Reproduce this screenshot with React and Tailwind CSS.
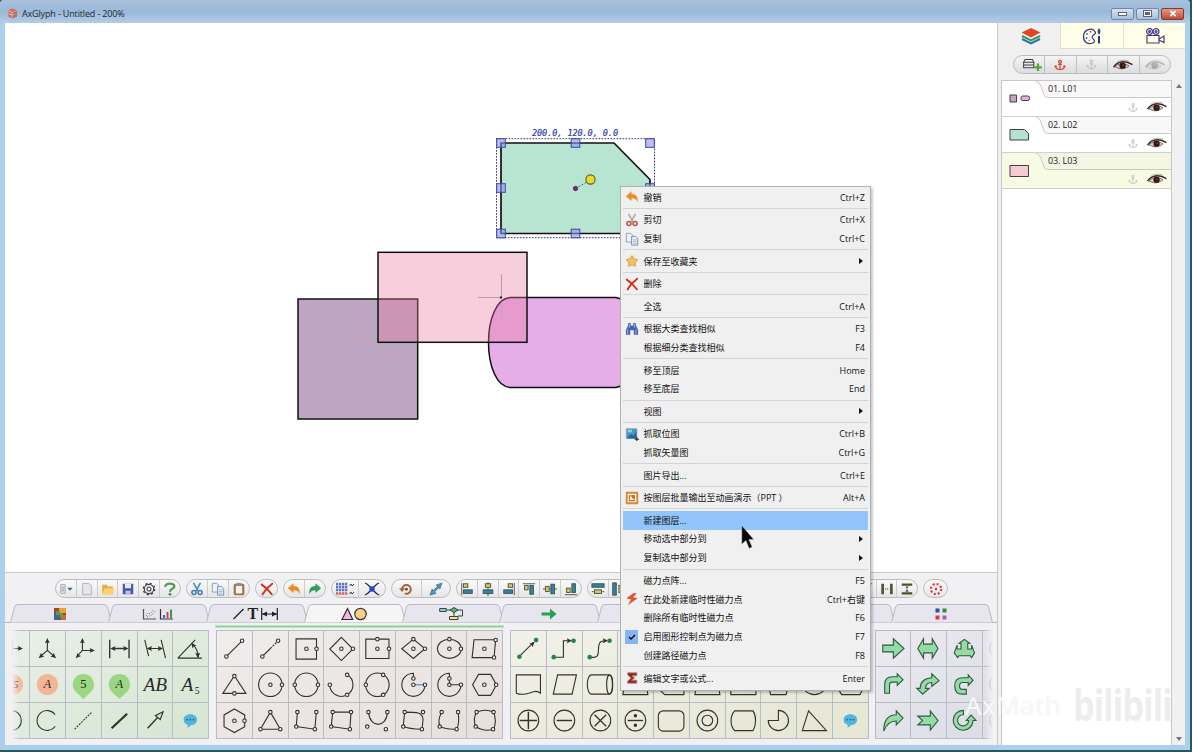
import React from 'react';
import { FaAnchor, FaStar } from 'react-icons/fa';

const ink = '#33322d';

/* ---------- palette primitives ---------- */

const Cell = ({ children }) => (
  <div className="h-9 w-[35.75px] shrink-0 border-r border-b border-[#b9bcc6]">
    <svg viewBox="0 0 36 36" className="block h-full w-full" fill="none" stroke={ink} strokeWidth="1.15">
      {children}
    </svg>
  </div>
);

const Dots = ({ at, fill = '#f6f3f0', r = 1.8 }) =>
  at.map(([x, y]) => <circle key={`${x}-${y}`} cx={x} cy={y} r={r} fill={fill} />);

const Tip = ({ x, y, angle = 0 }) => (
  <path d="M0 0 L-5.5 -2.5 L-4.5 0 L-5.5 2.5 Z" fill={ink} stroke="none" transform={`translate(${x} ${y}) rotate(${angle})`} />
);

const Italic = ({ x = 18, y = 23, size = 15, children }) => (
  <text x={x} y={y} fontSize={size} textAnchor="middle" fill="#2b2b2b" stroke="none" fontStyle="italic" fontFamily="Liberation Serif, serif">
    {children}
  </text>
);

const Chat = () => (
  <g stroke="none">
    <path d="M18 11.500c4 0 7 2.400 7 5.700 0 3.200-2.700 5.600-6.600 5.700-.5 1.200-2 2.200-3.900 2.400.8-.8 1-1.800.8-2.700C12.700 21.700 11 19.700 11 17.200c0-3.300 3-5.700 7-5.700z" fill="#55b4dc" />
    <circle cx="14.800" cy="17" r=".9" fill="#1b6b97" />
    <circle cx="18" cy="17" r=".9" fill="#1b6b97" />
    <circle cx="21.200" cy="17" r=".9" fill="#1b6b97" />
  </g>
);

const annotationCells = [
  <g><path d="M7 18h17M18 8v18" /><Tip x={29} y={18} /><path d="M20 18h6" /></g>,
  <g><path d="M18 20V10M18 20l-7 6M18 20l7 6" /><Tip x={18} y={7} angle={-90} /><Tip x={9} y={28} angle={138} /><Tip x={27} y={28} angle={42} /></g>,
  <g><path d="M17 20V9M17 20h11M17 20l-5 5.500" /><Tip x={17} y={7} angle={-90} /><Tip x={30} y={20} /><Tip x={10} y={28} angle={135} /></g>,
  <g><path d="M8 9v19M28 9v19M11 18h14" strokeWidth="1.400" /><Tip x={27.500} y={18} /><Tip x={8.500} y={18} angle={180} /></g>,
  <g><path d="M7 9l4 17M24 9l4.500 19M11 18h13" /><Tip x={26} y={18} /><Tip x={9} y={18} angle={180} /></g>,
  <g><path d="M5 28h25M5 28L23 9M20 13c3 3 6 8 6 14" /><Tip x={19} y={12} angle={-125} /><Tip x={26} y={28} angle={85} /></g>,
  <g><circle cx="18" cy="18" r="11" fill="#f2bd9d" stroke="none" /><Italic size={11} x={21.500} y={22}>5</Italic></g>,
  <g><circle cx="18" cy="18" r="11" fill="#f2b595" stroke="none" /><Italic size={13} y={22}>A</Italic></g>,
  <g><path d="M18 7a11 11 0 0 1 8 18.500L18 33l-8-7.500A11 11 0 0 1 18 7z" fill="#9bd683" stroke="none" /><text x="18" y="22" fontSize="13" textAnchor="middle" fill="#222" stroke="none" fontFamily="Liberation Serif, serif">5</text></g>,
  <g><path d="M18 7a11 11 0 0 1 8 18.500L18 33l-8-7.500A11 11 0 0 1 18 7z" fill="#9bd683" stroke="none" /><Italic size={13} y={22}>A</Italic></g>,
  <Italic size={20} y={25}>AB</Italic>,
  <g><Italic size={20} x={15} y={25}>A</Italic><text x="25" y="28" fontSize="10" textAnchor="middle" fill="#222" stroke="none" fontFamily="Liberation Serif, serif">5</text></g>,
  <circle cx="17" cy="18" r="10.300" />,
  <path d="M26 12a10.300 10.300 0 1 0 0 12" />,
  <path d="M9 27L27 9" strokeDasharray="2 1.200" />,
  <path d="M10 26L26 11" strokeWidth="2.400" />,
  <g><path d="M10 26L22 13" strokeWidth="1.400" /><path d="M26 9l-8 4 5 4z" fill="#dce8da" /></g>,
  <Chat />,
];

const shapeCells = [
  <g><path d="M10 26L26 10" /><Dots at={[[9.700, 26.300], [26, 10]]} /></g>,
  <g><path d="M10 26l8-8" /><path d="M18 18l8-8" strokeDasharray="2 1.200" /><Dots at={[[9.700, 26.300], [26, 10]]} /></g>,
  <g><path d="M7.300 8h21.200v21H7.300z" /><Dots at={[[18, 18.300], [28.500, 18.300]]} /></g>,
  <g><path d="M18 6.500l12 12-12 12-12-12z" /><Dots at={[[18, 18.300], [30, 18.300]]} /></g>,
  <g><path d="M6 8.300h24v20H6z" /><Dots at={[[18, 8.300], [18, 18.300], [30, 18.300]]} /></g>,
  <g><path d="M18 8.300l12 10-12 10-12-10z" /><Dots at={[[18, 8.300], [18, 18.300], [30, 18.300]]} /></g>,
  <g><ellipse cx="18" cy="18.300" rx="12.300" ry="9.900" /><Dots at={[[18, 8.300], [18, 18.300], [30, 18.300]]} /></g>,
  <g><path d="M7.300 9h22.400L28 27.500H5.300z" /><Dots at={[[18, 18.300], [29.700, 9.200], [28, 27.300]]} /></g>,
  <g><path d="M18 9l12 18.200H6z" /><Dots at={[[18, 9.300], [18, 27.200]]} /></g>,
  <g><circle cx="18" cy="18.300" r="12.200" /><Dots at={[[18, 18.300], [30, 18.300]]} /></g>,
  <g><circle cx="18" cy="18.300" r="12.200" /><Dots at={[[6, 18.300], [30, 18.300]]} /></g>,
  <g><path d="M6 18.300A12 12 0 1 0 24 7.900" /><Dots at={[[6, 18.300], [24, 8], [24, 28.700]]} /></g>,
  <g><circle cx="18" cy="18.300" r="12.200" /><Dots at={[[6, 18.300], [24, 8], [24, 28.700]]} /></g>,
  <g><path d="M18 12V6.300a12 12 0 1 0 12 12" /><path d="M18 18.300h12" stroke="#4b86b8" /><Dots at={[[18, 11.800], [18, 18.300], [30, 18.300]]} /></g>,
  <g><path d="M18 18.300v-12a12 12 0 1 0 12 12z" /><Dots at={[[18, 11.800], [18, 18.300], [30, 18.300]]} /></g>,
  <g><path d="M12 7.500h12.500l6 10.800-6 11H12l-6.200-11z" /><Dots at={[[18, 18.300], [30.200, 18.300]]} /></g>,
  <g><path d="M18 6l10.700 6.200v12.200L18 30.500 7.300 24.400V12.200z" /><Dots at={[[18, 18.300], [28.500, 18.300]]} /></g>,
  <g><path d="M18 9.300L28.300 27H7.700z" /><Dots at={[[18, 9.300], [7.700, 27], [28.300, 27]]} /></g>,
  <g><path d="M8.700 9.300l-1.200 15 19.300 2.700L28.300 9.300" /><Dots at={[[8.700, 9.300], [7.500, 24.300], [26.800, 27], [28.300, 9.300]]} /></g>,
  <g><path d="M9 9.300h19L26.800 27 7.500 24.300z" /><Dots at={[[9, 9.300], [7.500, 24.300], [26.800, 27], [28, 9.300]]} /></g>,
  <g><path d="M9 10c1 16 18.500 16 19.300 0" /><Dots at={[[8.700, 9.300], [7.500, 24.300], [26.800, 27], [28.300, 9.300]]} /></g>,
  <g><path d="M9 9.300c12 0 19 0 19 8L27 27c-8 0-14 0-19.500-3z" /><Dots at={[[9, 9.300], [7.500, 24.300], [26.800, 27], [28, 9.300]]} /></g>,
  <g><path d="M10 9.300c-3 6-4 11-1.500 15 6 3 12 3 17 2.700 2.500-5 2.500-12 1.500-17.700" /><Dots at={[[10, 9.300], [8, 24.300], [25.500, 27], [27, 9.300]]} /></g>,
  <g><path d="M10 9.300c6-2.500 12-2.500 17.500 0 2.500 6 2.500 12 0 17.700-6 2-13 1-18.500-2.700-2-5-2-10 1-15z" /><Dots at={[[10, 9.300], [9, 24.300], [27, 27], [27.500, 9.300]]} /></g>,
];

const green = '#23834a';
const FlowEnds = ({ at }) => <g stroke="none"><Dots r={2.400} fill={green} at={at} /></g>;

const flowCells = [
  <g><path d="M9 26L23 12" /><Tip x={24.500} y={11} angle={-45} /><FlowEnds at={[[8.700, 26.500], [26, 9.300]]} /></g>,
  <g><path d="M8 27h9V10h6" /><Tip x={26} y={10} /><FlowEnds at={[[7, 27], [27.500, 10]]} /></g>,
  <g><path d="M8 27c12 2 6-9 9-14 1-3 4-3 6-3" /><Tip x={26} y={10} /><FlowEnds at={[[7, 27], [27.500, 10]]} /></g>,
  <g><path d="M8 27h9V10h7" /></g>,
  <g><path d="M9 26L23 12" /></g>,
  <g><path d="M8 27h9V10h7" /></g>,
  <g><path d="M9 26L23 12" /></g>,
  <g><path d="M8 27h9V10h7" /></g>,
  <g><path d="M9 26L23 12" /></g>,
  <g><path d="M8 27h9V10h7" /></g>,
  <path d="M5.500 8h25v19c-7-6-13 5-25 0z" />,
  <path d="M11 8h19.500L26 28H6.500z" />,
  <g><path d="M9 8h18c5 0 5 20 0 20H9C3 28 3 8 9 8z" /><ellipse cx="27.500" cy="18" rx="3" ry="10" /></g>,
  <path d="M9 8h18l4 20.500H5z" />,
  <path d="M5 8h26v20.500H11l-6-6z" />,
  <path d="M9 8h18l4 20.500H5z" />,
  <path d="M5 8h26v20.500H5z" />,
  <path d="M5 8h26l-5 20.500H10z" />,
  <path d="M6 18a12 10.500 0 0 0 24 0 12 10.500 0 0 0-24 0z" />,
  <path d="M5 8h26v14l-3 6.500H9L5 22z" />,
  <g><circle cx="18" cy="18" r="10.700" /><path d="M18 9v18M9 18h18" strokeWidth="1.500" /></g>,
  <g><circle cx="18" cy="18" r="10.700" /><path d="M10 18h16" strokeWidth="1.500" /></g>,
  <g><circle cx="18" cy="18" r="10.700" /><path d="M12 12l12 12M24 12L12 24" strokeWidth="1.300" /></g>,
  <g><circle cx="18" cy="18" r="10.700" /><path d="M10 18h16" strokeWidth="1.400" /><circle cx="18" cy="13" r="1.200" fill={ink} /><circle cx="18" cy="23" r="1.200" fill={ink} /></g>,
  <rect x="4.500" y="8" width="26.500" height="21" rx="5" />,
  <g><circle cx="18" cy="18" r="10.700" /><circle cx="18" cy="18" r="5.500" /></g>,
  <path d="M9 8h19c3.500 5 3.500 15 0 20.500H9c-5-5-5-15.500 0-20.500z" />,
  <path d="M18 18V7.500A10.500 10.500 0 1 1 7.500 18z" transform="matrix(-1 0 0 1 36 0) rotate(90 18 18)" />,
  <path d="M12 8l18.500 20.500H5.500z" />,
  <Chat />,
];

const arrowCells = [
  <path d="M7 14.500h11V8l11 10-11 10v-6.500H7z" />,
  <path d="M7 18l6-10v5.500h9V8l6 10-6 10v-5.500h-9V28z" />,
  <path d="M18 8.500l5.500 4h-2v6h4v-4l3 8-3 5-1.500-2H12.500l-1.500 2-3.500-5 3-8v4h4v-6h-2z" />,
  <path d="M9 27V18q0-8 8-8h5V7l6 6-6 6v-3.500h-5q-3 0-3 3V27z" />,
  <path d="M12 28l-6-6h3.500q0-10 12-11V7l7.500 7-7.500 6v-4q-6 0-6.500 6H19z" />,
  <path d="M20 28h-4q-8 0-8-8.500T16 11h6V8l5 5.500-5 5.500v-3h-6q-3 0-3 3.500t3 3.500h4z" />,
  <path d="M8 29q0-17 13-17V8l7 7.500-7 7v-4q-9 0-13 10.500z" />,
  <path d="M7 13.500h13V8l8 10-8 10v-5.500H7l5-4.500z" />,
  <path d="M17 7.500A10.300 10.300 0 1 0 27 18h3l-5-5.500-5 5.500h2.500A5.800 5.800 0 1 1 17 12z" />,
];

const Palette = ({ cells, cols, className }) => (
  <div className={`grid shrink-0 border-t border-l border-[#b9bcc6] ${className}`} style={{ gridTemplateColumns: `repeat(${cols}, 35.75px)` }}>
    {cells.map((c, i) => <Cell key={i}>{c}</Cell>)}
  </div>
);

/* ---------- small coloured icons ---------- */

const Svg = ({ children, className = 'h-[14px] w-[14px]' }) => (
  <svg viewBox="0 0 16 16" className={`shrink-0 ${className}`} fill="none">{children}</svg>
);

const UndoIcon = () => <Svg><path d="M1 7l6.500-5.500v3C13 4.500 15 8 14.500 14 13 10.500 11 9.500 7.500 9.500v3z" fill="#f08a24" /></Svg>;
const RedoIcon = () => <Svg><path d="M15 7L8.500 1.500v3C3 4.500 1 8 1.500 14 3 10.500 5 9.500 8.500 9.500v3z" fill="#2f9e5b" /></Svg>;
const CrossIcon = () => <Svg><path d="M2 3q6 4 11.500 11M14 2Q7 7 3 14" stroke="#d2301f" strokeWidth="2.200" strokeLinecap="round" /></Svg>;
const CutIcon = ({ blade = '#4a8cc0', handle = '#3c7fb8' }) => (
  <Svg><path d="M4 1l5 9M12 1L7 10" stroke={blade} strokeWidth="1.800" /><circle cx="4.500" cy="12" r="2.300" stroke={handle} strokeWidth="1.800" /><circle cx="11.500" cy="12" r="2.300" stroke={handle} strokeWidth="1.800" /></Svg>
);
const CopyIcon = () => (
  <Svg><path d="M1.500 1.500h5l2 2v8h-7z" fill="#eef3f9" stroke="#8299b5" /><path d="M7.500 5h4.500l2.500 2.500V15h-7z" fill="#e5edf6" stroke="#7189a8" /><path d="M9 9h4M9 11h4M9 13h4" stroke="#88a0bd" strokeWidth=".7" /></Svg>
);

const AlignIcon = ({ mode }) => {
  const y = '#dccb54';
  const b = '#2d86a5';
  const shapes = {
    left: <g><path d="M2 1v14" /><rect x="4" y="2" width="5" height="4" fill={y} /><rect x="4" y="9" width="10" height="4" fill={b} /></g>,
    hcenter: <g><path d="M8 0v16" /><rect x="5" y="2" width="6" height="4" fill={y} /><rect x="2.500" y="9" width="11" height="4" fill={b} /></g>,
    right: <g><path d="M14 1v14" /><rect x="7" y="2" width="5" height="4" fill={y} /><rect x="2" y="9" width="10" height="4" fill={b} /></g>,
    top: <g><path d="M1 2h14" /><rect x="3" y="4" width="4" height="5" fill={y} /><rect x="9" y="4" width="4" height="10" fill={b} /></g>,
    vcenter: <g><path d="M0 8h16" /><rect x="3" y="5" width="4" height="6" fill={y} /><rect x="9" y="2.500" width="4" height="11" fill={b} /></g>,
    bottom: <g><path d="M1 14.500h14" /><rect x="3" y="7" width="4" height="5" fill={y} /><rect x="9" y="2" width="4" height="10" fill={b} /></g>,
    width: <g><rect x="1" y="2" width="14" height="4" fill={b} /><rect x="4" y="9" width="8" height="4" fill={y} /><path d="M1 11h2M13 11h2" /></g>,
    height: <g><rect x="2" y="1" width="4" height="14" fill={b} /><rect x="9" y="4" width="4" height="8" fill={y} /></g>,
  };
  return <Svg><g stroke="#3a4a44" strokeWidth="1">{shapes[mode]}</g></Svg>;
};

const toolbar = [
  { w: 'w-[126px]', icons: [
    <Svg><path d="M2 3h5v10H2z" fill="#e3e6ea" stroke="#a0a4aa" /><path d="M3 6h3M3 8h3M3 10h3" stroke="#888" strokeWidth=".8" /><path d="M9.500 6.500h6l-3 3.500z" fill="#2765a3" /></Svg>,
    <Svg><path d="M3 1.500h7l3 3v10H3z" fill="#e4e6ea" stroke="#a9adb5" /></Svg>,
    <Svg><path d="M1.500 3h5l1 2h6v9h-12z" fill="#e9a83b" /><path d="M4 7h11.500L13 14H1.500z" fill="#fbd36b" /></Svg>,
    <Svg><path d="M2 2h12v12H2z" fill="#4c55a8" /><path d="M4.500 2h7v5h-7z" fill="#e7eaf6" /><path d="M5 10h6v4H5z" fill="#b9bfe0" /></Svg>,
    <Svg><circle cx="8" cy="8" r="5.300" stroke="#3e4349" strokeWidth="1.200" /><circle cx="8" cy="8" r="6.500" stroke="#3e4349" strokeWidth="1.600" strokeDasharray="2.500 2.600" /><circle cx="8" cy="8" r="2.300" stroke="#3e4349" strokeWidth="1.200" /></Svg>,
    <Svg><path d="M2.500 5.500C3 1 13 .8 13 4.800 13 8 8 7.300 8 11" stroke="#4f9b5b" strokeWidth="2.600" /><circle cx="8" cy="14" r="1.700" fill="#4f9b5b" /></Svg>,
  ] },
  { w: 'w-16', icons: [
    <CutIcon />,
    <CopyIcon />,
    <Svg><rect x="2.500" y="2.500" width="11" height="12" rx="1" fill="#a9824e" stroke="#7d6546" /><rect x="4.500" y="4.500" width="7" height="8.500" fill="#f3f3ef" /><rect x="5.500" y="1" width="5" height="3" fill="#8b8f94" /></Svg>,
  ] },
  { w: 'w-[23px]', icons: [<CrossIcon />] },
  { w: 'w-[43px]', icons: [<UndoIcon />, <RedoIcon />] },
  { w: 'w-[55px]', icons: [
    <svg viewBox="0 0 20 14" className="h-[14px] w-5" fill="none"><path d="M1 2h12M1 5h12M1 8h12" stroke="#6274c4" strokeWidth="2.300" strokeDasharray="2.300 .7" /><path d="M1 11.500h12" stroke="#d0615f" strokeWidth="2.300" strokeDasharray="2.300 .7" /><path d="M14.500 4l1.500-2 1 2 2-2M14.500 12l1.500-2 1 2 2-2" stroke="#333" strokeWidth=".9" /></svg>,
    <Svg className="h-4 w-4"><path d="M1 2c3 1 4 3 7 6 3-3 4-5 7-6M1 14c3-1 4-3 7-6 3 3 4 5 7 6" stroke="#23282c" strokeWidth="1.200" /><circle cx="8" cy="8" r="2.700" fill="#2446d6" /></Svg>,
  ] },
  { w: 'w-[60px]', icons: [
    <Svg><path d="M3.500 8a5 5 0 1 1 3 5" stroke="#a8653c" strokeWidth="2.200" /><path d="M0 7h7l-3.500 4.500z" fill="#a8653c" /><circle cx="8.500" cy="8.300" r="1.600" fill="#7c4a32" /></Svg>,
    <Svg><path d="M15 1L12.500 8 11 6.800 6.500 11 8 13l-7 2 2.500-7L5 9.500 9.500 5 8 3.500z" fill="#4d95bd" stroke="#2f5b7b" strokeWidth=".6" /></Svg>,
  ] },
  { w: 'w-[126px]', icons: ['left', 'hcenter', 'right', 'top', 'vcenter', 'bottom'].map((m) => <AlignIcon mode={m} />) },
  { w: 'w-[331px]', icons: [
    ...['width', 'height', 'left', 'right', 'top', 'bottom', 'width', 'height', 'left', 'right', 'top', 'bottom', 'left', 'top'].map((m) => <AlignIcon mode={m} />),
    <Svg><path d="M3 2v12M13 2v12" stroke="#4f512e" strokeWidth="3" /><path d="M5.500 8h5" stroke="#333" strokeDasharray="1.500 1" /></Svg>,
    <Svg><path d="M2 3h12M2 13h12" stroke="#4f512e" strokeWidth="2.600" /><path d="M6 5h4L8 8zM6 11h4L8 8z" fill="#555" /></Svg>,
  ] },
  { w: 'w-[25px]', icons: [
    <Svg><circle cx="8" cy="8" r="5.800" stroke="#d8343a" strokeWidth="2.400" strokeDasharray="2.300 2.255" /><circle cx="8" cy="8" r="1.400" fill="#d8343a" /></Svg>,
  ] },
];

const Toolbar = () => (
  <div className="flex h-[19px] gap-[5px] pl-[50px]">
    {toolbar.map((g, i) => (
      <div key={i} className={`flex shrink-0 overflow-hidden rounded-full border border-[#bdbdc1] bg-gradient-to-b from-[#fafafa] to-[#e6e6e8] ${g.w}`}>
        {g.icons.map((icon, k) => (
          <div key={k} className="flex flex-1 items-center justify-center border-r border-[#cbcbd0] last:border-r-0">
            {icon}
          </div>
        ))}
      </div>
    ))}
  </div>
);

/* ---------- category tabs ---------- */

const tabIcons = [
  <svg className="h-3 w-3" viewBox="0 0 12 12"><path d="M0 0h12v12H0z" fill="#a8402c" /><path d="M5 0h7v5H5z" fill="#e9a22f" /><path d="M0 6h5v6H0z" fill="#3967a8" /><path d="M7 7h5v5H7z" fill="#d9662f" /><path d="M2 3h4v4H2zM6 5h3v5H6z" fill="#4fa05a" /></svg>,
  <svg className="h-3 w-8" viewBox="0 0 32 12" fill="none"><path d="M1.500 1v10H14" stroke="#555" strokeWidth="1.200" /><path d="M4 8l2-3 2 1 3-4M5 9l5-2 3-4" stroke="#777" strokeDasharray="1 1.400" /><path d="M18.500 1v10H31" stroke="#333" strokeWidth="1.200" /><path d="M21 7h2v3h-2z" fill="#3b6bc0" /><path d="M24.500 4h2v6h-2z" fill="#d1423d" /><path d="M28 1.500h2V10h-2z" fill="#3c9450" /></svg>,
  <div className="flex items-center gap-[3px]">
    <svg className="h-3 w-[11px]" viewBox="0 0 11 12"><path d="M.5 11L10.500 1" stroke="#222" strokeWidth="1.300" /></svg>
    <span className="font-['Liberation_Serif',serif] text-[16px] leading-[18px] font-bold text-[#222]">T</span>
    <svg className="h-3 w-[17px]" viewBox="0 0 17 12"><path d="M.7 0v12M16.300 0v12M1 6h15" stroke="#222" strokeWidth="1.200" /><path d="M1 6l5-2.500v5zM16 6l-5-2.500v5z" fill="#222" /></svg>
  </div>,
  <svg className="h-[14px] w-[26px]" viewBox="0 0 26 14"><path d="M6.500 1.500l5.200 11H1z" fill="#f0b6dd" stroke="#33262f" strokeWidth="1.200" /><circle cx="19.500" cy="7" r="5.700" fill="#fbd08b" stroke="#40362a" strokeWidth="1.200" /></svg>,
  <svg className="h-[14px] w-[26px]" viewBox="0 0 26 14" fill="none" stroke="#2f4a3a" strokeWidth="1"><path d="M7 3h16.500v6H19M15 5v5" /><path d="M.7 1.500h6.500v3H.7z" fill="#8fd0e0" /><path d="M15 .5l4 2.500-4 2.500L11 3z" fill="#5bbb62" /><path d="M10.500 9.500H19v3h-8.500z" fill="#f5e48a" /></svg>,
  <svg className="h-3 w-4" viewBox="0 0 16 12"><path d="M.5 4.500H9V.5L15.500 6 9 11.500v-4H.5z" fill="#25a152" /></svg>,
  null,
  null,
  null,
  <svg className="h-3 w-3" viewBox="0 0 12 12"><path d="M.5.500h4v4h-4z" fill="#2b4f9e" /><path d="M7.500.500h4v4h-4z" fill="#2b8a44" /><path d="M.5 7.500h4v4h-4z" fill="#d8393a" /><path d="M7.500 7.500h4v4h-4z" fill="#a45fb5" /></svg>,
];

const CategoryTabs = () => (
  <div className="flex h-[19px] border-b border-[#b5b5bd] pl-[6px]">
    {tabIcons.map((icon, i) => {
      const active = i === 3;
      return (
        <div key={i} className="relative flex h-[19px] w-[97.900px] shrink-0 items-center justify-center">
          <svg className="absolute top-0 -left-[1px] h-[19px] w-[102px]" viewBox="0 0 102 19" fill="none">
            <path d="M.5 18.500L4.500 3Q5.300.500 8 .5h86q2.700 0 3.500 2.500l4 15.500" fill={active ? '#f5f5f6' : '#e7e5ed'} stroke="#bab9c2" />
          </svg>
          <div className="relative">{icon}</div>
        </div>
      );
    })}
  </div>
);

const BottomPanel = () => (
  <div className="h-[173px] overflow-hidden border-t border-[#c8cad2] bg-[#f1f1f3] pt-[6px]">
    <Toolbar />
    <div className="pt-[6px]"><CategoryTabs /></div>
    <div className="flex h-[121px] pl-[7px]">
      <div className="relative mt-[7px] flex h-[109px] w-[197px] shrink-0 justify-end overflow-hidden">
        <Palette cells={annotationCells} cols={6} className="bg-gradient-to-br from-[#eaf0e9] to-[#d5e6d2]" />
        <div className="absolute inset-y-0 left-0 w-[7px] bg-gradient-to-r from-[#f1f1f3] to-transparent" />
      </div>
      <div className="ml-[7px] shrink-0">
        <div className="mt-[3px] mb-[3px] h-px bg-[#8fcf93] outline outline-[#bfe3c1]" />
        <Palette cells={shapeCells} cols={8} className="bg-gradient-to-br from-[#f0edec] to-[#e6dfdc]" />
      </div>
      <div className="mt-[7px] ml-[7px] shrink-0">
        <Palette cells={flowCells} cols={10} className="bg-gradient-to-br from-[#f1f1ea] to-[#e5e6d2]" />
      </div>
      <div className="relative mt-[7px] ml-[6px] h-[109px] w-[118px] shrink-0 overflow-hidden">
        <div className="grid w-[144px] grid-cols-4 border-t border-l border-[#b9bcc6] bg-gradient-to-br from-[#ebebf0] to-[#dadae3]">
          {[0, 1, 2].map((r) => (
            <React.Fragment key={r}>
              {arrowCells.slice(r * 3, r * 3 + 3).map((c, i) => <Cell key={i}><g fill="#93dca5" stroke="#2f5a43">{c}</g></Cell>)}
              <Cell><circle cx="18" cy="18" r="11" stroke="#8d9a98" /></Cell>
            </React.Fragment>
          ))}
        </div>
        <div className="absolute inset-y-0 right-0 w-2 bg-gradient-to-l from-[#f1f1f3] to-transparent" />
      </div>
    </div>
  </div>
);

/* ---------- drawing canvas ---------- */

const handles = [[501, 143], [575.500, 143], [650, 143], [501, 188], [650, 188], [501, 233.500], [575.500, 233.500]];

const Canvas = () => (
  <div className="h-[549px] overflow-hidden bg-white">
    <svg viewBox="5 23 992 549" className="block h-[549px] w-[992px]" fill="none">
      <rect x="298" y="299" width="119.700" height="120" fill="#bda6c1" stroke="#111" strokeWidth="1.500" />
      <path d="M511 297.500H616q22 4 22 45t-22 45H511C481 387 481 298 511 297.500z" fill="#e5aee9" stroke="#111" strokeWidth="1.500" />
      <rect x="378" y="252.300" width="149" height="90" fill="#e8769b" fillOpacity=".35" stroke="#111" strokeWidth="1.500" />
      <path d="M478 297.500h23M501.500 274v24" stroke="#a98b98" strokeWidth=".8" />
      <path d="M501.500 298v20" stroke="#a98b98" strokeWidth=".8" opacity=".3" />
      <circle cx="501" cy="297.500" r="1.200" fill="#21305e" />
      <path d="M501 143h113l36 36.500v54H501z" fill="#b8e4d2" stroke="#111" strokeWidth="1.700" />
      <rect x="496.500" y="138.700" width="158" height="99" stroke="#2f2f88" strokeDasharray="1.600 1.400" />
      {handles.map(([x, y]) => (
        <rect key={`${x}-${y}`} x={x - 4.300} y={y - 4.300} width="8.600" height="8.600" fill="#8e92ee" fillOpacity=".6" stroke="#3a48a6" />
      ))}
      <path d="M575.500 188.500l15-8.500" stroke="#3c62c0" strokeDasharray="2 1.500" />
      <circle cx="575.500" cy="188.500" r="2.200" fill="#8e1f55" stroke="#3c2d72" strokeWidth=".8" />
      <circle cx="590.500" cy="179.500" r="4.600" fill="#e8dc22" stroke="#5e5a30" strokeWidth="1.100" />
      <text x="532" y="135.700" fontSize="8.500" fontStyle="italic" fill="#2433a8" stroke="#2433a8" strokeWidth=".15" textLength="86" fontFamily="DejaVu Sans Mono, monospace">200.0, 120.0, 0.0</text>
    </svg>
  </div>
);

/* ---------- layers panel ---------- */

const Eye = ({ faded }) => (
  <svg viewBox="0 0 24 14" className={`h-3 w-[22px] ${faded ? 'opacity-30' : ''}`} fill="none">
    <path d="M1 9.500C5 3 14 1 23 6.500" stroke="#3a2a24" strokeWidth="1.700" />
    <path d="M2 9.500C7 4.500 14 4.500 19 8c-5 4-11 4.500-15 1.500z" fill="#d8cfca" stroke="#5a4238" strokeWidth=".8" />
    <circle cx="11.500" cy="7.800" r="3.700" fill="#351813" />
    <circle cx="12.300" cy="7" r=".7" fill="#b99c94" />
    <path d="M5 3.500C9 1 14 .8 19 2.500" stroke="#8a6f60" strokeWidth=".6" />
  </svg>
);

const layers = [
  { name: '01. L01', thumb: <g><path d="M1 3h6.500v7H1z" fill="#bfa6c3" /><rect x="12" y="4" width="8.500" height="4.500" rx="1.800" fill="#e5aee9" /></g> },
  { name: '02. L02', thumb: <path d="M1 1.500h14.500l4 4v6.500H1z" fill="#b3e3d0" /> },
  { name: '03. L03', thumb: <path d="M1 1.500h18.500v11H1z" fill="#f7cbd3" />, current: true },
];

const LayerRow = ({ name, thumb, current }) => (
  <div className={`flex h-9 border-b border-[#cfcfcf] ${current ? 'bg-[#f8fbe3]' : 'bg-white'}`}>
    <div className="flex w-[33px] items-center justify-center pl-[2px]">
      <svg viewBox="0 0 22 14" className="h-[14px] w-[22px]" stroke="#4a3c44">{thumb}</svg>
    </div>
    <div className="flex flex-1 flex-col">
      <div className="relative h-[17px]">
        <svg className="absolute inset-0 h-[17px] w-[136px]" viewBox="0 0 136 17">
          <path d="M1 .5q3 0 4.500 3.500L9 14q1 2.500 3.500 2.500H137V0H1z" fill={current ? '#f4f6e4' : '#f8f8f9'} />
          <path d="M1 .5q3 0 4.500 3.500L9 14q1 2.500 3.500 2.500H137" fill="none" stroke="#c9c9cc" />
        </svg>
        <span className="relative block pl-[13px] text-[9px] leading-[16px] tracking-[-0.1px] text-[#222]">{name}</span>
      </div>
      <div className="flex flex-1 items-center justify-end gap-2 pr-[3px]">
        <FaAnchor className="h-[9px] w-[10px] text-[#cbd0cb]" />
        <Eye />
      </div>
    </div>
  </div>
);

const SidePanel = () => (
  <div className="flex h-[722px] w-[188px] flex-col border-l border-[#c6c8d0] bg-[#f0f0f0]">
    <div className="flex h-[26px]">
      <div className="flex flex-1 items-center justify-center pl-1">
        <svg viewBox="0 0 20 18" className="h-[18px] w-5" fill="none">
          <path d="M1 12l9 4.500 9-4.500" stroke="#2f72ac" strokeWidth="2" />
          <path d="M1 9l9 4.500L19 9" stroke="#2e9b56" strokeWidth="2" />
          <path d="M10 1l9.500 4.500L10 10.500.5 5.500z" fill="#e34426" />
        </svg>
      </div>
      <div className="flex w-[63px] items-center justify-center border-b border-l border-[#dedecf] bg-[#ffffe8]">
        <svg viewBox="0 0 20 18" className="h-[18px] w-5" fill="none">
          <path d="M12.500 4C10 .5 2 2 1.500 9c-.4 6 4 8 7.500 7.500 3-.5 4-2 3-3.500s-3-2-1.500-4S15 7 12.500 4z" fill="#fff" stroke="#3a3675" strokeWidth="1.200" />
          <circle cx="5" cy="7" r="1" fill="#3aa05a" /><circle cx="8.500" cy="4.800" r="1" fill="#d3413c" /><circle cx="4.500" cy="11" r="1" fill="#3767c0" /><circle cx="7.500" cy="13.500" r="1" fill="#d49b2c" />
          <path d="M17 9v7.500" stroke="#2c3878" strokeWidth="2" /><path d="M17 1c2 2 2 5 0 7-2-2-2-5 0-7z" fill="#2c5590" />
        </svg>
      </div>
      <div className="flex w-[62px] items-center justify-center border-b border-l border-[#dedecf] bg-[#ffffe8]">
        <svg viewBox="0 0 20 18" className="h-[18px] w-5" fill="none" stroke="#433d85" strokeWidth="1.200">
          <circle cx="4.500" cy="4.500" r="2.900" /><circle cx="11" cy="4.500" r="2.900" /><circle cx="4.500" cy="4.500" r=".9" /><circle cx="11" cy="4.500" r=".9" />
          <path d="M2 8.500h12v7.500H2z" /><path d="M14 12l5-3v6.500L14 13" />
        </svg>
      </div>
    </div>
    <div className="mt-[6px] ml-[15px] flex h-[19px] w-[158px] shrink-0 overflow-hidden rounded-full border border-[#bcbcbf] bg-gradient-to-b from-[#f4f4f4] to-[#dddde0]">
      <div className="flex w-[31px] items-center justify-end border-r border-[#c0c0c4] pr-[2px]">
        <svg viewBox="0 0 22 14" className="h-[13px] w-[21px]" fill="none">
          <path d="M4 1.500h8l1.500 3h-11zM2.500 4.500v3h11v-3M2.500 7.500v3h11v-3" stroke="#444" strokeWidth="1.100" />
          <path d="M18 6v8M14 10H22" stroke="#56a832" strokeWidth="2.400" />
        </svg>
      </div>
      <div className="flex flex-1 items-center justify-center border-r border-[#c0c0c4]"><FaAnchor className="h-[12px] w-[12px] text-[#dc4a3d]" /></div>
      <div className="flex flex-1 items-center justify-center border-r border-[#c0c0c4]"><FaAnchor className="h-[11px] w-[11px] text-[#c3c6c8]" /></div>
      <div className="flex flex-1 items-center justify-center border-r border-[#c0c0c4]"><Eye /></div>
      <div className="flex flex-1 items-center justify-center"><Eye faded /></div>
    </div>
    <div className="mt-[6px] ml-[3px] flex flex-1">
      <div className="flex-1 border border-b-0 border-[#c8c8cb] bg-white">
        {layers.map((l) => <LayerRow key={l.name} {...l} />)}
      </div>
      <div className="flex w-[13px] flex-col items-center justify-between bg-[#f1f1f1] py-1">
        <svg viewBox="0 0 6 4" className="h-1 w-[6px]"><path d="M3 0l3 4H0z" fill="#777" /></svg>
        <svg viewBox="0 0 6 4" className="h-1 w-[6px]"><path d="M3 4L0 0h6z" fill="#777" /></svg>
      </div>
    </div>
  </div>
);

/* ---------- context menu ---------- */

const menu = [
  { label: '撤销', shortcut: 'Ctrl+Z', icon: <UndoIcon /> },
  null,
  { label: '剪切', shortcut: 'Ctrl+X', icon: <CutIcon blade="#b3aaa4" handle="#ba5549" /> },
  { label: '复制', shortcut: 'Ctrl+C', icon: <CopyIcon /> },
  null,
  { label: '保存至收藏夹', sub: true, icon: <FaStar className="h-3 w-3 text-[#f6c25d]" stroke="#c9924a" strokeWidth="34" /> },
  null,
  { label: '删除', icon: <CrossIcon /> },
  null,
  { label: '全选', shortcut: 'Ctrl+A' },
  null,
  { label: '根据大类查找相似', shortcut: 'F3', icon: <Svg><path d="M4 1h2.500v3h3V1H12l1 4 2 4v5.500h-5V9.500H6v5H1V9l2-4z" fill="#4464a8" /><path d="M3 8.500v5M12.500 8.500v5M5 2.500v4M11 2.500v4" stroke="#a8bde5" strokeWidth="1.100" /></Svg> },
  { label: '根据细分类查找相似', shortcut: 'F4' },
  null,
  { label: '移至顶层', shortcut: 'Home' },
  { label: '移至底层', shortcut: 'End' },
  null,
  { label: '视图', sub: true },
  null,
  { label: '抓取位图', shortcut: 'Ctrl+B', icon: <Svg><path d="M1.500 2h12v11h-12z" fill="#4598c6" stroke="#8ba0b0" /><path d="M2 13l5-5 3 2 3-6v9z" fill="#236695" /><path d="M3 3h5v3H3z" fill="#8bc8e2" /><path d="M11 14h5M13.500 11.500V16" stroke="#222" strokeWidth="1.200" /></Svg> },
  { label: '抓取矢量图', shortcut: 'Ctrl+G' },
  null,
  { label: '图片导出...', shortcut: 'Ctrl+E' },
  null,
  { label: '按图层批量输出至动画演示（PPT ）', shortcut: 'Alt+A', icon: <Svg><path d="M2 2h12v12H2z" fill="#fff3e2" stroke="#d58a37" strokeWidth="2.200" /><path d="M5 5.500h5.500V11H5z" stroke="#c7702a" strokeWidth="1.300" /><path d="M8 5v3.500h3.500V5z" fill="#c7702a" /></Svg> },
  null,
  { label: '新建图层...', hover: true },
  { label: '移动选中部分到', sub: true },
  { label: '复制选中部分到', sub: true },
  null,
  { label: '磁力点阵...', shortcut: 'F5' },
  { label: '在此处新建临时性磁力点', shortcut: 'Ctrl+右键', icon: <Svg><path d="M10 1L1.500 7l5.500 1.500L3 15l11.500-8L9 6l4.500-4.500z" fill="#e2532f" /></Svg> },
  { label: '删除所有临时性磁力点', shortcut: 'F6' },
  { label: '启用图形控制点为磁力点', shortcut: 'F7', checked: true },
  { label: '创建路径磁力点', shortcut: 'F8' },
  null,
  { label: '编辑文字或公式...', shortcut: 'Enter', icon: <Svg><path d="M3 2h10.500v3.500H8L11 8l-3.500 2.500h6V14H3v-2.500L7 8 3 4.500z" fill="#8c2d25" stroke="#b98073" strokeWidth=".8" /></Svg> },
];

const MenuItem = ({ label, icon, shortcut, sub, hover, checked }) => (
  <div className={`flex h-[18.850px] items-center text-[9px] leading-none whitespace-pre text-[#101010] ${hover ? 'bg-[#91c5fb]' : ''}`}>
    <div className="flex w-[20.500px] justify-center pr-[3px]">
      {icon}
      {checked && (
        <span className="flex h-[14px] w-[13px] items-center justify-center bg-[#85b5f2]">
          <svg viewBox="0 0 8 8" className="h-2 w-2" fill="none"><path d="M1 4l2 2 4-4" stroke="#111" strokeWidth="1.500" /></svg>
        </span>
      )}
    </div>
    <span className="flex-1">{label}</span>
    {sub && <svg viewBox="0 0 4 6" className="mr-[5px] h-[6px] w-[4px]"><path d="M0 0l4 3-4 3z" fill="#111" /></svg>}
    {shortcut && <span className="pr-[3px]">{shortcut}</span>}
  </div>
);

const ContextMenu = () => (
  <div className="absolute top-[186px] left-[620px] h-[505px] w-[251px] border border-[#b0b0b0] bg-[#f0f0f0] px-[2px] pt-[1px] shadow-[2px_2px_2px_rgba(0,0,0,0.200)]">
    {menu.map((m, i) =>
      m ? (
        <MenuItem key={i} {...m} />
      ) : (
        <div key={i} className="flex h-[3.650px] items-center"><div className="h-px w-full bg-[#d3d3d8]" /></div>
      )
    )}
  </div>
);

/* ---------- window ---------- */

const TitleBar = () => (
  <div className="flex h-[23px] items-center bg-gradient-to-b from-[#a9c1dc] via-[#9ab9d9] to-[#b4cce5] pt-[4px] pr-[6px] pl-[7px]">
    <svg viewBox="0 0 12 12" className="h-[11px] w-[11px]"><path d="M6 .5l5 2V9l-5 2.500L1 9V2.500z" fill="#d26d64" /><path d="M1 3l5 2 5-2M6 5v6M1 6l5 2 5-2" stroke="#f1dcd8" strokeWidth=".8" fill="none" /><path d="M6 5l5-2v6l-5 2.500z" fill="#8f7276" opacity=".6" /></svg>
    <span className="ml-1 flex-1 text-[9px] tracking-[-0.15px] text-[#1c2530]">AxGlyph - Untitled - 200%</span>
    <div className="flex gap-[2px]">
      <div className="flex h-[12px] w-[23px] items-center justify-center rounded-[2px] border border-[#7088a6] bg-gradient-to-b from-[#d5e2f0] to-[#a9c0da]"><div className="h-1 w-[9px] border border-[#5b6672] bg-white" /></div>
      <div className="flex h-[12px] w-[23px] items-center justify-center rounded-[2px] border border-[#7088a6] bg-gradient-to-b from-[#d5e2f0] to-[#a9c0da]"><div className="h-[5px] w-[7px] border border-white bg-[#5b6672] outline outline-[#5b6672]" /></div>
      <div className="flex h-[12px] w-[23px] items-center justify-center rounded-[2px] border border-[#7d3b36] bg-gradient-to-b from-[#e39a87] to-[#c4452f]">
        <svg viewBox="0 0 8 8" className="h-[7px] w-[8px]"><path d="M1 1l6 6M7 1L1 7" stroke="#fff" strokeWidth="2" /></svg>
      </div>
    </div>
  </div>
);

const App = () => (
  <div className="relative h-[752px] w-[1192px] overflow-hidden bg-[#27585a] font-['Open_Sans','Noto_Sans_CJK_SC',sans-serif]">
    <div className="h-[750px] w-[1190px] overflow-hidden rounded-t-[4px] bg-[#abd0ee]">
      <TitleBar />
      <div className="mx-[5px] flex h-[722px]">
        <div className="w-[992px] shrink-0">
          <Canvas />
          <BottomPanel />
        </div>
        <SidePanel />
      </div>
    </div>

    <ContextMenu />

    {/* Mouse pointer */}
    <svg viewBox="0 0 12 24" className="absolute top-[525px] left-[741px] h-[25px] w-[13px]">
      <path d="M.5.500v18l4-3.700 3 7.700 3-1.300L7.300 14H12z" fill="#080808" stroke="#ddd" strokeWidth=".4" />
    </svg>

    {/* Watermark */}
    <div className="absolute top-[688px] left-[965px] flex items-center leading-none">
      <span className="w-[108px] text-[26px] tracking-[0.5px] text-white/80 [text-shadow:0_0_1px_#ddd]">AxMath</span>
      <span className="origin-left scale-y-125 text-[34px] font-bold tracking-[-0.8px] text-[#ededed]">bilibili</span>
    </div>
  </div>
);

export default App;
